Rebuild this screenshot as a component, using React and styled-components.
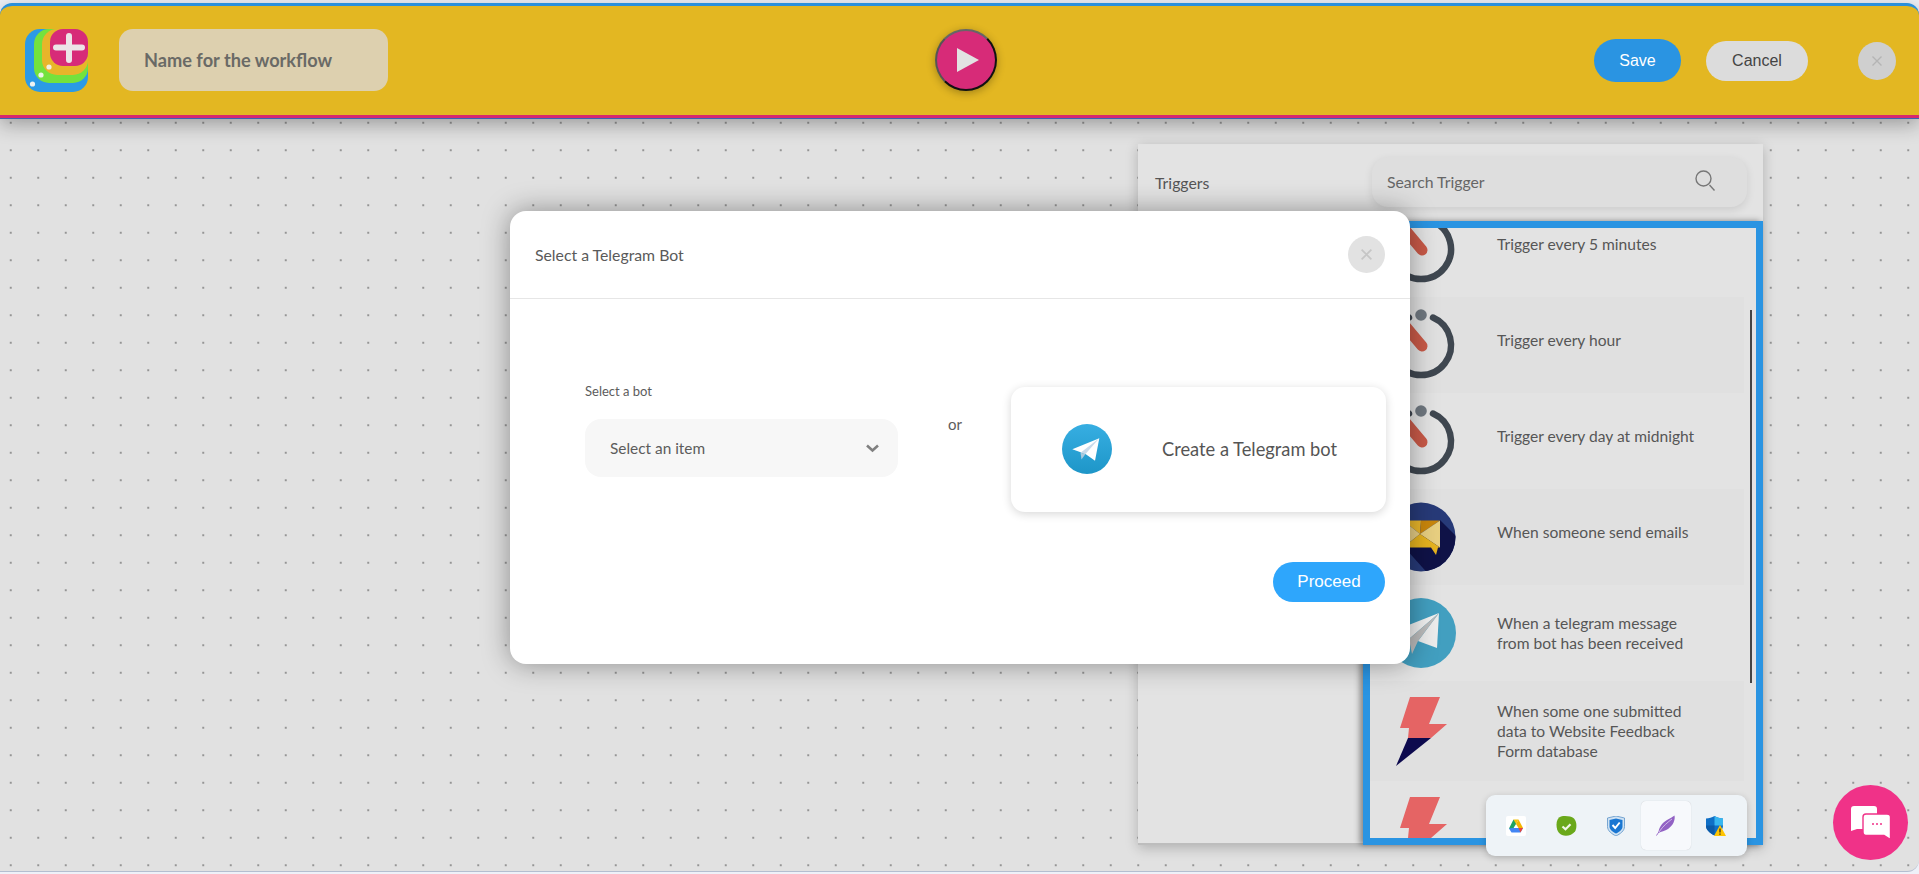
import React from 'react'
import styled, { createGlobalStyle } from 'styled-components'

const Global = createGlobalStyle`
  html, body {
    margin: 0;
    height: 100%;
    overflow: hidden;
    background: #eef1f8;
    font-family: 'Lato', 'Liberation Sans', sans-serif;
  }
  * { box-sizing: border-box; }
`

const Shell = styled.div`
  position: relative;
  width: 1919px;
  height: 874px;
  padding: 3px 0 2px;
  display: flex;
  flex-direction: column;
`

const HeaderBar = styled.header`
  position: relative;
  z-index: 2;
  flex: none;
  height: 115px;
  display: flex;
  align-items: center;
  padding: 0 23px 0 25px;
  background: #e3b722;
  border-top: 3px solid #2a90dc;
  border-bottom: 3px solid #d7286f;
  border-radius: 12px 12px 0 0;
  box-shadow: 0 1px 0 #3b62b4, 0 6px 20px rgba(0, 0, 0, 0.32);
`

const NameField = styled.div`
  width: 269px;
  height: 62px;
  margin: -1px 0 0 31px;
  padding-left: 25px;
  display: flex;
  align-items: center;
  border-radius: 14px;
  background: #ddd0af;
  color: #6a6a66;
  font-size: 18.2px;
  font-weight: 700;
`

const PlayButton = styled.button`
  width: 62px;
  height: 62px;
  margin: -2px 0 0 547px;
  padding: 0 0 0 4px;
  display: flex;
  align-items: center;
  justify-content: center;
  border-radius: 50%;
  border: 2px solid #111;
  border-top-color: #666;
  border-left-color: #555;
  background: #d72b78;
  box-shadow: 0 2px 8px rgba(0, 0, 0, 0.3);
`

const Actions = styled.div`
  margin-left: auto;
  display: flex;
  align-items: center;
`

const PillButton = styled.button`
  width: ${p => p.$w}px;
  height: ${p => p.$h}px;
  margin-right: ${p => p.$gap || 0}px;
  border: 0;
  border-radius: 22px;
  background: ${p => p.$bg};
  color: ${p => p.$color};
  font-family: 'Liberation Sans', sans-serif;
  font-size: ${p => p.$size || 16}px;
`

const RoundClose = styled.div`
  width: ${p => p.$size}px;
  height: ${p => p.$size}px;
  border-radius: 50%;
  display: flex;
  align-items: center;
  justify-content: center;
  background: ${p => p.$bg};
  color: ${p => p.$color};
`

const Canvas = styled.main`
  position: relative;
  flex: 1;
  display: flex;
  justify-content: flex-end;
  align-items: flex-start;
  padding: 26px 156px 0 0;
  background-color: #e1e1e1;
  background-image: radial-gradient(circle at center, #7d7d7d 0.6px, transparent 1px);
  background-size: 27.5px 27.5px;
  background-position: -3px -9px;
  border-bottom: 1px solid #b4bed0;
  border-radius: 0 0 12px 0;
`

const TriggerPanel = styled.section`
  width: 625px;
  height: 701px;
  display: flex;
  flex-direction: column;
  background: #e3e3e3;
  border-bottom: 2px solid #bdbdbd;
  box-shadow: 0 3px 12px rgba(0, 0, 0, 0.22);
`

const PanelHead = styled.div`
  flex: none;
  height: 77px;
  display: flex;
  align-items: flex-start;
  padding: 13px 16px 0 17px;
  color: #555;
  font-size: 15.8px;
`

const PanelTitle = styled.div`
  line-height: 52px;
`

const SearchBox = styled.div`
  width: 375px;
  height: 50px;
  margin-left: auto;
  padding: 0 31px 2px 15px;
  display: flex;
  align-items: center;
  justify-content: space-between;
  border-radius: 16px;
  background: #dedede;
  color: #666;
  box-shadow: 0 3px 8px rgba(0, 0, 0, 0.1);
`

const PanelBody = styled.div`
  flex: 1;
  display: flex;
  justify-content: flex-end;
  min-height: 0;
  margin-bottom: -2px;
`

const TriggerFrame = styled.div`
  position: relative;
  width: 400px;
  overflow: hidden;
  border: 7px solid #2a94e2;
  background: #e3e3e3;
  box-shadow: -3px 0 6px rgba(0, 0, 0, 0.42);
`

const TriggerList = styled.div`
  width: 374px;
  margin-top: -27px;
`

const TriggerRow = styled.div`
  height: ${p => p.$h}px;
  display: flex;
  align-items: center;
  padding-left: 16px;
  background: ${p => (p.$dark ? '#e0e0e0' : '#e3e3e3')};
`

const RowIcon = styled.svg`
  flex: none;
  width: 70px;
  height: 70px;
  overflow: visible;
`

const RowLabel = styled.div`
  margin-left: 41px;
  padding-bottom: ${p => (p.$single ? 10 : 0)}px;
  color: #565656;
  font-size: 15.6px;
  line-height: 20px;
  white-space: pre-line;
`

const ScrollThumb = styled.div`
  position: absolute;
  left: 380px;
  top: 82px;
  width: 2px;
  height: 373px;
  background: #444;
`

const Modal = styled.div`
  position: absolute;
  z-index: 3;
  left: 510px;
  top: 93px;
  width: 900px;
  height: 453px;
  border-radius: 16px;
  background: #fff;
  box-shadow: 0 0 28px rgba(0, 0, 0, 0.38);
`

const ModalHead = styled.div`
  height: 88px;
  display: flex;
  align-items: center;
  justify-content: space-between;
  padding: 0 25px;
  border-bottom: 1px solid #e6e6e6;
  color: #5a5a5a;
  font-size: 15.8px;
`

const ModalRow = styled.div`
  display: flex;
  align-items: flex-start;
  margin-top: 84px;
  padding-left: 75px;
`

const BotColumn = styled.div`
  width: 313px;
`

const FieldLabel = styled.div`
  height: 16px;
  margin-bottom: 20px;
  color: #5c5c5c;
  font-size: 13px;
  line-height: 16px;
`

const SelectBox = styled.div`
  height: 58px;
  padding: 0 19px 0 25px;
  display: flex;
  align-items: center;
  justify-content: space-between;
  border-radius: 16px;
  background: #f7f7f7;
  color: #5c5c5c;
  font-size: 15.4px;
`

const OrText = styled.div`
  width: 113px;
  margin-top: 31px;
  padding-left: 50px;
  color: #5c5c5c;
  font-size: 15px;
  line-height: 20px;
`

const BotCard = styled.div`
  width: 375px;
  height: 125px;
  margin-top: 4px;
  padding: 0 0 1px 51px;
  display: flex;
  align-items: center;
  border-radius: 14px;
  background: #fff;
  box-shadow: 0 2px 10px rgba(0, 0, 0, 0.16);
  color: #555;
  font-size: 18.3px;
`

const CardIcon = styled.svg`
  width: 50px;
  height: 50px;
  margin-right: 50px;
`

const ModalFoot = styled.div`
  display: flex;
  justify-content: flex-end;
  margin-top: 50px;
  padding-right: 25px;
`

const Tray = styled.div`
  position: absolute;
  z-index: 4;
  left: 1486px;
  top: 677px;
  width: 261px;
  height: 61px;
  padding: 6px 5px;
  display: grid;
  grid-template-columns: repeat(5, 50px);
  border-radius: 9px;
  background: #eef3f7;
  box-shadow: 0 2px 7px rgba(0, 0, 0, 0.2);
`

const TrayCell = styled.div`
  height: 49px;
  display: flex;
  align-items: center;
  justify-content: center;
  border-radius: 5px;
  background: ${p => (p.$active ? '#f7f9fc' : 'transparent')};
  box-shadow: ${p => (p.$active ? '0 0 1px rgba(0,0,0,.2)' : 'none')};
`

const ChatBubble = styled.div`
  position: absolute;
  z-index: 4;
  left: 1833px;
  top: 667px;
  width: 75px;
  height: 75px;
  display: flex;
  align-items: center;
  justify-content: center;
  border-radius: 50%;
  background: #f03288;
`

const CloseGlyph = ({ size, weight = 1.4 }) => (
  <svg width={size} height={size} viewBox="0 0 12 12">
    <path d="M1.5 1.5l9 9M10.5 1.5l-9 9" stroke="currentColor" strokeWidth={weight} fill="none" />
  </svg>
)

const LogoMark = styled.svg`
  flex: none;
  margin-top: -1px;
`

const Logo = () => (
  <LogoMark width="63" height="63" viewBox="0 0 63 63">
    <rect width="63" height="63" rx="15" fill="#2b9ae6" />
    <rect x="9" width="54" height="54" rx="15" fill="#74e23d" />
    <rect x="17" width="46" height="46" rx="15" fill="#e8b52a" />
    <rect x="25" width="38" height="37" rx="13" fill="#d72b78" />
    <path d="M44 7v24M31 18.500h26" stroke="#ece4e8" strokeWidth="6" strokeLinecap="round" />
    <circle cx="7.500" cy="55" r="2.600" fill="#eef2f2" />
    <circle cx="16" cy="46" r="2.600" fill="#eef6e8" />
    <circle cx="24" cy="38" r="2.600" fill="#f3efe0" />
  </LogoMark>
)

const TimerIcon = () => (
  <RowIcon viewBox="-35 -35 70 70">
    <path d="M12 -27.500A30 30 0 1 1 -12 -27.500" fill="none" stroke="#3f4750" strokeWidth="6.500" strokeLinecap="round" />
    <circle cx="0" cy="-30" r="5.800" fill="#707880" />
    <path d="M1 1L-20 -24" stroke="#c95a48" strokeWidth="11" strokeLinecap="round" />
  </RowIcon>
)

const MailIcon = () => (
  <RowIcon viewBox="-35 -35 70 70">
    <defs>
      <clipPath id="mailDisc"><circle r="34.500" /></clipPath>
    </defs>
    <circle r="34.500" fill="#273a78" />
    <polygon clipPath="url(#mailDisc)" points="-16,11 19,-17 40,4 40,40 10,40" fill="#0f1247" />
    <polygon points="-18,-16.500 0,-16.500 -1,-3" fill="#e8b52a" />
    <polygon points="0,-16.500 19,-16.500 -1,-3" fill="#c9860c" />
    <polygon points="-18,-16.500 -1,-3 -18,10.500" fill="#e6cd85" />
    <polygon points="19,-16.500 19,10.500 -1,-3" fill="#e8cf80" />
    <polygon points="-18,10.500 -1,-3 19,10.500 17,10.500 15,18 10,10.500" fill="#e6b31f" />
  </RowIcon>
)

const PlaneIcon = () => (
  <RowIcon viewBox="-35 -35 70 70">
    <circle r="35" fill="#429fc0" />
    <polygon points="18,-20 -25,-3 -12,6" fill="#f1f1f1" />
    <polygon points="18,-20 -3,8 16,15" fill="#ececec" />
    <polygon points="18,-20 -12,6 -9,21 -3,8" fill="#bcbcbc" />
  </RowIcon>
)

const BoltIcon = () => (
  <RowIcon viewBox="-35 -35 70 70">
    <polygon points="-11,-34 19,-34 8,-7 26,-7 10,7 -13,7 -12,-3 -21,-3" fill="#e56464" />
    <polygon points="-13,7 10,7 -25,35" fill="#0d0a4e" />
  </RowIcon>
)

const TelegramBadge = () => (
  <CardIcon viewBox="-25 -25 50 50">
    <defs>
      <linearGradient id="tgBadge" x1="0" y1="0" x2="0" y2="1">
        <stop offset="0" stopColor="#37aee2" />
        <stop offset="1" stopColor="#1e96c8" />
      </linearGradient>
    </defs>
    <circle r="25" fill="url(#tgBadge)" />
    <polygon points="-14.700,0.300 12.300,-10.700 8,11.700 -1.500,5" fill="#fff" />
    <polygon points="-6.500,3.700 12.300,-10.700 -1.500,5" fill="#c8daea" />
    <polygon points="-6.500,3.700 -5.500,10.500 -1.500,5" fill="#a9c9dd" />
  </CardIcon>
)

const DriveIcon = () => (
  <svg width="20" height="20" viewBox="0 0 20 20">
    <rect width="20" height="20" rx="2" fill="#fff" />
    <polygon points="7.500,3.500 12.500,3.500 10,8 7.500,8.500" fill="#f4c20d" />
    <polygon points="7.500,3.500 10,8 6,14.500 3,12.500" fill="#1ea362" />
    <polygon points="12.500,3.500 17,12 12.500,12 10,8" fill="#f4b400" />
    <polygon points="6,12 17,12 14.500,16.500 5.500,16.500 3,12.500" fill="#4285f4" />
    <polygon points="12.500,12 17,12 14.500,16.500" fill="#e8453c" />
  </svg>
)

const GreenIcon = () => (
  <svg width="21" height="20" viewBox="0 0 21 20">
    <path d="M5 0.500C9 -0.300 15 0 18 2.500C21 5.500 21 12 19 15.500C16 19.500 10 20.500 6 19C2 17.500 0.500 13 0.500 8.500C0.500 4.500 2 1.500 5 0.500Z" fill="#6aa81a" />
    <path d="M6.500 10.500l3 2.800l5-5" stroke="#f1f6e8" strokeWidth="2.200" fill="none" />
  </svg>
)

const ShieldIcon = () => (
  <svg width="18" height="20" viewBox="0 0 18 20">
    <path d="M9 0L17.500 2V10.500C17.500 15 13 18 9 20C5 18 0.500 15 0.500 10.500V2Z" fill="#cfe2f3" stroke="#5c93c8" strokeWidth="0.800" />
    <path d="M9 2.500L15.500 4V10.500C15.500 13.800 12 16 9 17.500C6 16 2.500 13.800 2.500 10.500V4Z" fill="#1976d2" />
    <path d="M5.500 9l2.700 3l4.500-5.500" stroke="#fff" strokeWidth="1.900" fill="none" />
  </svg>
)

const QuillIcon = () => (
  <svg width="20" height="21" viewBox="0 0 20 21">
    <path d="M0.500 20.500C2 18 3.500 16 5 14.500" stroke="#9a6cc8" strokeWidth="1" fill="none" />
    <path d="M18.500 0.500C19.500 5 17 10.500 12 14C9 16 5 16.500 2.500 18C2.500 13 6 8 11 5C14 3.500 16.500 2 18.500 0.500Z" fill="#9262c4" />
    <path d="M16 4C12 7 7 11 3 17" stroke="#d6c2ea" strokeWidth="0.900" fill="none" />
  </svg>
)

const DefenderIcon = () => (
  <svg width="20" height="20" viewBox="0 0 20 20">
    <path d="M8.500 0C11 1.800 14 2.300 17 2.500V10C17 14 12.500 17.500 8.500 19.500C4.500 17.500 0 14 0 10V2.500C3 2.300 6 1.800 8.500 0Z" fill="#0f6fc6" />
    <path d="M8.500 0C11 1.800 14 2.300 17 2.500V9.500H8.500Z" fill="#38b6ef" />
    <path d="M0 9.500H8.500V19.500C4.500 17.500 0 14 0 10Z" fill="#0b5aa8" />
    <polygon points="14,9 20,20 8,20" fill="#ffc400" />
    <path d="M14 12.500v4M14 17.500v1.200" stroke="#222" strokeWidth="1.200" />
  </svg>
)

const triggers = [
  { id: 1, h: 96, icon: <TimerIcon />, text: 'Trigger every 5 minutes' },
  { id: 2, h: 96, icon: <TimerIcon />, text: 'Trigger every hour', dark: true },
  { id: 3, h: 96, icon: <TimerIcon />, text: 'Trigger every day at midnight' },
  { id: 4, h: 96, icon: <MailIcon />, text: 'When someone send emails', dark: true },
  { id: 5, h: 96, icon: <PlaneIcon />, text: 'When a telegram message\nfrom bot has been received' },
  { id: 6, h: 100, icon: <BoltIcon />, text: 'When some one submitted\ndata to Website Feedback\nForm database', dark: true },
  { id: 7, h: 100, icon: <BoltIcon /> },
]

export default function App() {
  return (
    <Shell>
      <Global />
      <HeaderBar>
        <Logo />
        <NameField>Name for the workflow</NameField>
        <PlayButton aria-label="Run">
          <svg width="22" height="24" viewBox="0 0 22 24"><polygon points="0,0 22,12 0,24" fill="#e2e2e2" /></svg>
        </PlayButton>
        <Actions>
          <PillButton $w={87} $h={43} $gap={25} $bg="#2a94e2" $color="#fff">Save</PillButton>
          <PillButton $w={102} $h={40} $gap={50} $bg="#dcdcdc" $color="#444">Cancel</PillButton>
          <RoundClose $size={38} $bg="#cfcfcf" $color="#b4b4b4"><CloseGlyph size={12} /></RoundClose>
        </Actions>
      </HeaderBar>

      <Canvas>
        <TriggerPanel>
          <PanelHead>
            <PanelTitle>Triggers</PanelTitle>
            <SearchBox>
              Search Trigger
              <svg width="21" height="22" viewBox="0 0 21 22">
                <circle cx="8.500" cy="8.500" r="7.500" fill="none" stroke="#777" strokeWidth="1.400" />
                <path d="M14.500 15l5 5.500" stroke="#777" strokeWidth="1.400" />
              </svg>
            </SearchBox>
          </PanelHead>
          <PanelBody>
            <TriggerFrame>
              <TriggerList>
                {triggers.map(t => (
                  <TriggerRow key={t.id} $h={t.h} $dark={t.dark}>
                    {t.icon}
                    {t.text && <RowLabel $single={!t.text.includes('\n')}>{t.text}</RowLabel>}
                  </TriggerRow>
                ))}
              </TriggerList>
              <ScrollThumb />
            </TriggerFrame>
          </PanelBody>
        </TriggerPanel>

        <Modal>
          <ModalHead>
            Select a Telegram Bot
            <RoundClose $size={37} $bg="#e2e2e2" $color="#c6c6c6"><CloseGlyph size={13} weight={1.6} /></RoundClose>
          </ModalHead>
          <ModalRow>
            <BotColumn>
              <FieldLabel>Select a bot</FieldLabel>
              <SelectBox>
                Select an item
                <svg width="13" height="9" viewBox="0 0 13 9">
                  <path d="M1 1.500l5.500 5l5.500-5" stroke="#808080" strokeWidth="2.600" fill="none" />
                </svg>
              </SelectBox>
            </BotColumn>
            <OrText>or</OrText>
            <BotCard>
              <TelegramBadge />
              Create a Telegram bot
            </BotCard>
          </ModalRow>
          <ModalFoot>
            <PillButton $w={112} $h={40} $size={17} $bg="#2ea6fc" $color="#fff">Proceed</PillButton>
          </ModalFoot>
        </Modal>

        <Tray>
          <TrayCell><DriveIcon /></TrayCell>
          <TrayCell><GreenIcon /></TrayCell>
          <TrayCell><ShieldIcon /></TrayCell>
          <TrayCell $active><QuillIcon /></TrayCell>
          <TrayCell><DefenderIcon /></TrayCell>
        </Tray>

        <ChatBubble>
          <svg width="40" height="34" viewBox="0 0 40 34">
            <path d="M3 0H23C25 0 26 1 26 3V20C26 22 25 23 23 23H6L0 25V3C0 1 1 0 3 0Z" fill="#fff" />
            <path d="M15 8H36C38 8 39.500 9.500 39.500 11V33.500L33 29.500H15C13 29.500 12 28 12 26V11C12 9.500 13 8 15 8Z" fill="#fff" stroke="#f03288" strokeWidth="1.400" />
            <path d="M21 18h2M25 18h2M29 18h2" stroke="#f03288" strokeWidth="1.600" />
          </svg>
        </ChatBubble>
      </Canvas>
    </Shell>
  )
}
